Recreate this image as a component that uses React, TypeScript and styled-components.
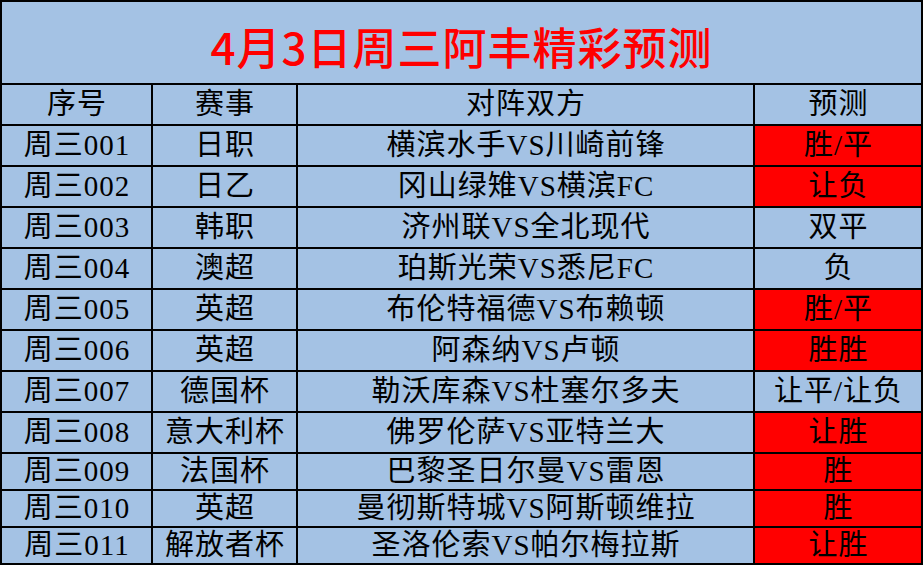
import React from 'react'
import styled, { createGlobalStyle } from 'styled-components'

const GlobalStyle = createGlobalStyle`
  html, body {
    margin: 0;
    padding: 0;
    background: #ffffff;
  }
`

const Sheet = styled.div`
  width: 923px;
  height: 565px;
  box-sizing: border-box;
  display: grid;
  grid-template-columns: 149px 143px 455px 166px;
  grid-template-rows: 81px 39px repeat(8, 39px) repeat(3, 35px);
  gap: 2px;
  padding: 2px;
  background: #000000;
`

const Title = styled.div`
  grid-column: 1 / -1;
  display: flex;
  align-items: center;
  justify-content: center;
  padding-top: 6px;
  background: #a4c2e4;
  color: #ff0000;
  font-family: 'Noto Sans CJK SC', 'Liberation Sans', sans-serif;
  font-size: 44px;
  font-weight: 500;
  letter-spacing: 1px;
`

const Cell = styled.div<{ $hot?: boolean }>`
  display: flex;
  align-items: center;
  justify-content: center;
  padding-left: 1px;
  background: ${props => (props.$hot ? '#ff0000' : '#a4c2e4')};
  color: #000000;
  font-family: 'Liberation Serif', 'Noto Sans CJK SC', serif;
  font-size: 29px;
  letter-spacing: 1px;
  line-height: 1;
  white-space: nowrap;
`

const headers = ['序号', '赛事', '对阵双方', '预测']

const rows = [
  ['周三001', '日职', '横滨水手VS川崎前锋', '胜/平', true],
  ['周三002', '日乙', '冈山绿雉VS横滨FC', '让负', true],
  ['周三003', '韩职', '济州联VS全北现代', '双平', false],
  ['周三004', '澳超', '珀斯光荣VS悉尼FC', '负', false],
  ['周三005', '英超', '布伦特福德VS布赖顿', '胜/平', true],
  ['周三006', '英超', '阿森纳VS卢顿', '胜胜', true],
  ['周三007', '德国杯', '勒沃库森VS杜塞尔多夫', '让平/让负', false],
  ['周三008', '意大利杯', '佛罗伦萨VS亚特兰大', '让胜', true],
  ['周三009', '法国杯', '巴黎圣日尔曼VS雷恩', '胜', true],
  ['周三010', '英超', '曼彻斯特城VS阿斯顿维拉', '胜', true],
  ['周三011', '解放者杯', '圣洛伦索VS帕尔梅拉斯', '让胜', true],
] as const

export default function App() {
  return (
    <>
      <GlobalStyle />
      <Sheet>
        <Title>4月3日周三阿丰精彩预测</Title>
        {headers.map(h => (
          <Cell key={h}>{h}</Cell>
        ))}
        {rows.map(([no, league, match, tip, hot]) => (
          <React.Fragment key={no}>
            <Cell>{no}</Cell>
            <Cell>{league}</Cell>
            <Cell>{match}</Cell>
            <Cell $hot={hot}>{tip}</Cell>
          </React.Fragment>
        ))}
      </Sheet>
    </>
  )
}
